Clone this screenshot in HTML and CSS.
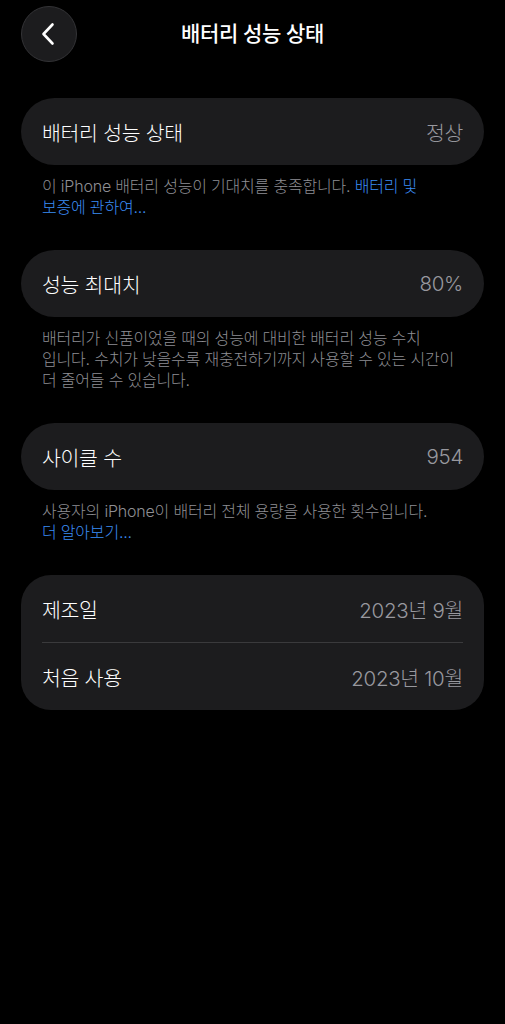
FILE: index.html
```html
<!DOCTYPE html>
<html lang="ko">
<head>
<meta charset="utf-8">
<link rel="stylesheet" href="styles.css">
</head>
<body>
<div class="screen">
  <header class="header">
    <button class="back" aria-label="뒤로">
      <svg width="16" height="24" viewBox="0 0 16 24"><path d="M12.5 2.5 L3.5 12 L12.5 21.5" fill="none" stroke="#fff" stroke-width="2.6" stroke-linecap="round" stroke-linejoin="round"/></svg>
    </button>
    <h1 class="title">배터리 성능 상태</h1>
  </header>

  <section class="group">
    <div class="card">
      <div class="row"><span class="label">배터리 성능 상태</span><span class="value">정상</span></div>
    </div>
    <p class="note">이 iPhone 배터리 성능이 기대치를 충족합니다. <a class="link">배터리 및<br>보증에 관하여...</a></p>
  </section>

  <section class="group">
    <div class="card">
      <div class="row"><span class="label">성능 최대치</span><span class="value">80%</span></div>
    </div>
    <p class="note">배터리가 신품이었을 때의 성능에 대비한 배터리 성능 수치<br>입니다. 수치가 낮을수록 재충전하기까지 사용할 수 있는 시간이<br>더 줄어들 수 있습니다.</p>
  </section>

  <section class="group">
    <div class="card">
      <div class="row"><span class="label">사이클 수</span><span class="value">954</span></div>
    </div>
    <p class="note">사용자의 iPhone이 배터리 전체 용량을 사용한 횟수입니다.<br><a class="link">더 알아보기...</a></p>
  </section>

  <section class="group">
    <div class="card card-list">
      <div class="row"><span class="label">제조일</span><span class="value">2023년 9월</span></div>
      <div class="divider"></div>
      <div class="row"><span class="label">처음 사용</span><span class="value">2023년 10월</span></div>
    </div>
  </section>
</div>
</body>
</html>
```

FILE: styles.css
```css
* { box-sizing: border-box; }
html, body {
  margin: 0;
  padding: 0;
  background: #000;
  height: 100%;
}
body {
  font-family: Inter, "Noto Sans CJK KR", sans-serif;
  color: #fff;
}
.screen {
  width: 505px;
  min-height: 1024px;
  background: #000;
  padding: 0 21px;
}
.header {
  position: relative;
  height: 62px;
  padding-top: 6px;
  display: flex;
  align-items: center;
  justify-content: center;
}
.back {
  position: absolute;
  left: 0;
  top: 6px;
  width: 56px;
  height: 56px;
  border-radius: 50%;
  background: #1c1c1e;
  border: 1px solid #333336;
  display: flex;
  align-items: center;
  justify-content: center;
  padding: 0 3px 0 0;
  margin: 0;
}
.title {
  margin: 0;
  font-size: 21px;
  font-weight: 500;
  letter-spacing: -0.4px;
  line-height: 56px;
}
.group { margin-top: 36px; }
.group + .group { margin-top: 32px; }
.card {
  background: #1c1c1e;
  border-radius: 34px;
  padding: 0 21px;
}
.card-list { border-radius: 30px; }
.row {
  height: 67px;
  display: flex;
  align-items: center;
  justify-content: space-between;
  font-size: 20.5px;
  font-weight: 300;
  letter-spacing: -0.3px;
}
.label { color: #fff; }
.value { color: #98989e; }
.divider {
  height: 1px;
  background: #3a3a3c;
}
.note {
  margin: 11px 0 0;
  padding: 0 21px;
  font-size: 16px;
  font-weight: 300;
  line-height: 21px;
  color: #8e8e93;
  letter-spacing: -0.2px;
}
.link { color: #3b8df5; }
```
